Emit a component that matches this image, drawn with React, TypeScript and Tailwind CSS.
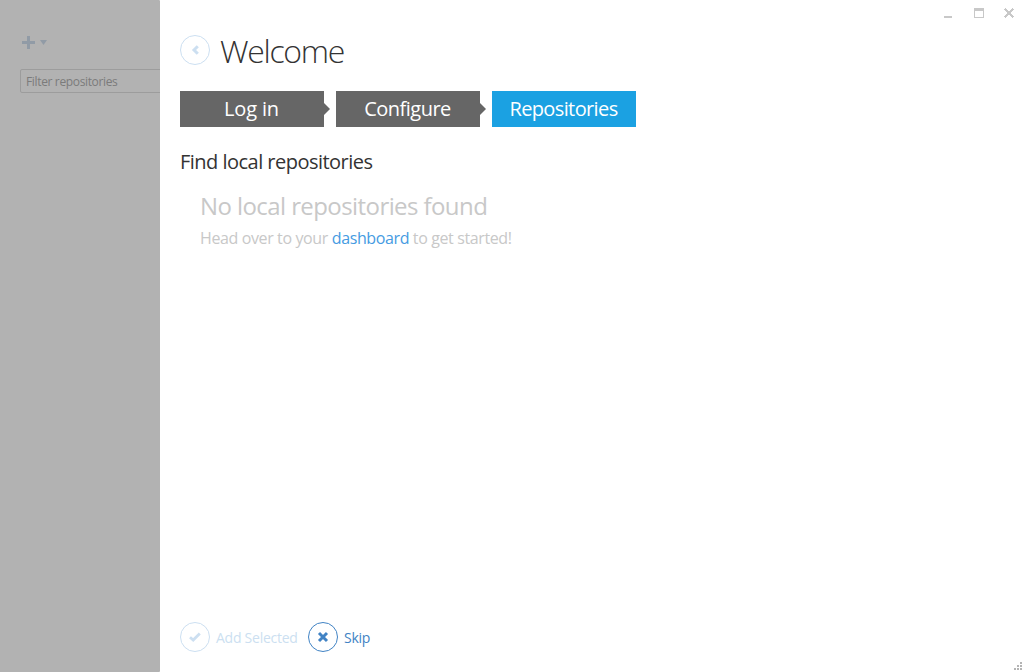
import type { ReactNode } from "react";

function CircleIcon({ color, children }: { color: string; children: ReactNode }) {
  return (
    <svg width="30" height="30" viewBox="0 0 30 30" className={`shrink-0 ${color}`} fill="none">
      <circle cx="15" cy="15" r="14.5" stroke="currentColor" />
      {children}
    </svg>
  );
}

function Step({ label, active = false, tracking }: { label: string; active?: boolean; tracking: string }) {
  return (
    <div className="flex items-center">
      <div
        className={`flex h-9 w-36 items-center justify-center pr-px text-[20px] text-white ${active ? "bg-[#1ba1e2]" : "bg-[#666666]"}`}
      >
        <span className={`whitespace-nowrap ${tracking}`}>{label}</span>
      </div>
      {!active && (
        <svg width="12" height="12" viewBox="0 0 12 12" className="text-[#666666]">
          <path d="M0 0L6 6L0 12Z" fill="currentColor" />
        </svg>
      )}
    </div>
  );
}

export default function App() {
  return (
    <div className="flex h-[672px] w-[1024px] overflow-hidden bg-white font-['Open_Sans','Noto_Sans',sans-serif]">
      <aside className="flex h-[672px] w-40 shrink-0 flex-col overflow-hidden rounded-r-[1px] bg-[#b2b2b2] pl-5">
        <div className="flex h-[69px] items-start pt-9">
          <svg width="30" height="14" viewBox="0 0 30 14" className="text-[#919ba6]" fill="currentColor">
            <path d="M7 0h3v5h5v3h-5v5H7V8H2V5h5z" />
            <path d="M20 4h7l-3.5 5z" />
          </svg>
        </div>
        <div className="flex h-6 w-[180px] shrink-0 items-center rounded-[2px] border border-[#9c9c9c] pl-[5px] pt-px text-[12px] text-[#7b7b7b]">
          <span className="whitespace-nowrap tracking-[-0.35px]">Filter repositories</span>
        </div>
      </aside>

      <main className="flex flex-1 flex-col">
        <div className="flex h-[35px] items-start justify-end pr-[9px] pt-2 text-[#c8c8c8]">
          <svg width="72" height="11" viewBox="0 0 72 11" fill="currentColor" shapeRendering="crispEdges">
            <path d="M1 8h8v2H1z" />
            <path fillRule="evenodd" d="M31 0h10v10H31zM32 3v6h8V3z" />
            <path d="M62 0h1v1h1v1h1v1h2V2h1V1h1V0h1v1h1v1h-1v1h-1v1h-1v2h1v1h1v1h1v1h-1v1h-1V9h-1V8h-1V7h-2v1h-1v1h-1v1h-1V9h-1V8h1V7h1V6h1V4h-1V3h-1V2h-1V1h1z" />
          </svg>
        </div>

        <div className="flex h-[30px] items-center pl-5">
          <CircleIcon color="text-[#ccdff1]">
            <path d="M17.8 11.2L14 15L17.8 18.8" stroke="currentColor" strokeWidth="3" />
          </CircleIcon>
          <h1 className="ml-2.5 whitespace-nowrap pt-0.5 text-[32px] font-light leading-[30px] tracking-[-1.3px] text-[#333333]">
            Welcome
          </h1>
        </div>

        <nav className="mt-[26px] flex h-9 pl-5">
          <Step label="Log in" tracking="tracking-[-0.15px]" />
          <Step label="Configure" tracking="tracking-[-0.5px]" />
          <Step label="Repositories" tracking="tracking-[-0.62px]" active />
        </nav>

        <section className="flex flex-col pl-5">
          <h2 className="mt-[21px] flex text-[20px] leading-7 text-[#333333]">
            <span className="tracking-[-0.52px]">Find local repositories</span>
          </h2>
          <p className="ml-5 mt-3.5 flex text-[24px] leading-8 text-[#c8c8c8]">
            <span className="tracking-[-0.58px]">No local repositories found</span>
          </p>
          <p className="ml-5 mt-1 flex whitespace-pre text-[16px] leading-6 tracking-[-0.38px] text-[#c8c8c8]">
            <span>Head over to your </span>
            <a className="text-[#459be2]">dashboard</a>
            <span> to get started!</span>
          </p>
        </section>

        <footer className="mt-auto flex h-[50px] items-start pl-5">
          <div className="flex w-32 items-center text-[#ccdff1]">
            <CircleIcon color="text-[#ccdff1]">
              <path d="M10 15.2L13.2 18L19.8 11.5" stroke="currentColor" strokeWidth="2.8" />
            </CircleIcon>
            <span className="ml-1.5 whitespace-nowrap text-[14px] tracking-[-0.25px]">Add Selected</span>
          </div>
          <div className="flex items-center text-[#4183c4]">
            <CircleIcon color="text-[#4183c4]">
              <path d="M11 11L19 19M19 11L11 19" stroke="currentColor" strokeWidth="3" />
            </CircleIcon>
            <span className="ml-1.5 whitespace-nowrap text-[14px] tracking-[-0.25px]">Skip</span>
          </div>
          <svg width="8" height="8" viewBox="0 0 8 8" className="ml-auto mr-0.5 mt-10 text-[#b4b4b4]" fill="currentColor">
            <path d="M6 0h2v2H6zM3 3h2v2H3zM6 3h2v2H6zM0 6h2v2H0zM3 6h2v2H3zM6 6h2v2H6z" />
          </svg>
        </footer>
      </main>
    </div>
  );
}
